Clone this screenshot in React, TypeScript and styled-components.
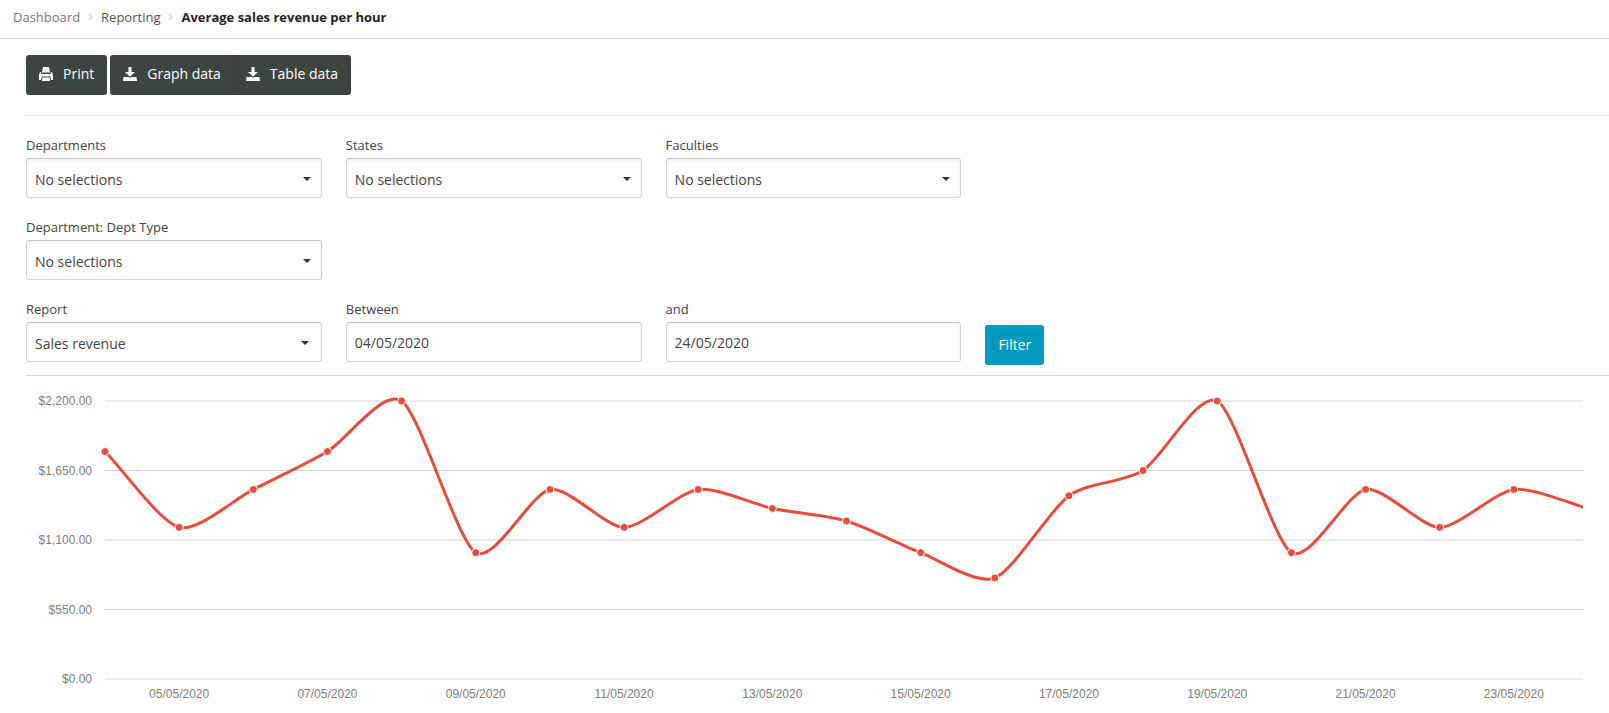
import React, { useId, useLayoutEffect, useRef, useState } from "react";
import styled, { createGlobalStyle } from "styled-components";

const GlobalStyle = createGlobalStyle`
  *, *::before, *::after { box-sizing: border-box; }
  body {
    margin: 0;
    background: #fff;
    color: #444;
    font-family: "Open Sans", "Liberation Sans", sans-serif;
    font-size: 14px;
    overflow-x: hidden;
  }
`;

const Breadcrumb = styled.nav`
  border-bottom: 1px solid #d9d9d9;
  padding: 7px 13px 11px;

  ol {
    display: flex;
    align-items: center;
    gap: 8px;
    margin: 0;
    padding: 0;
    list-style: none;
    font-size: 13px;
  }
  li { display: flex; align-items: center; gap: 8px; }
`;

const CrumbLink = styled.a<{ $dark?: boolean }>`
  color: ${(p) => (p.$dark ? "#555" : "#777")};
  text-decoration: none;
  line-height: 20px;
`;

const CurrentCrumb = styled.span`
  color: #222;
  font-weight: 700;
  line-height: 20px;
`;

const Content = styled.main`
  padding: 16px 0 0 26px;
`;

const Button = styled.button<{ $primary?: boolean }>`
  display: inline-flex;
  align-items: center;
  gap: 10px;
  height: 40px;
  padding: 0 13px;
  border: 0;
  border-radius: 3px;
  background: ${(p) => (p.$primary ? "#0099c0" : "#3d4542")};
  color: #fff;
  font: inherit;
  line-height: 20px;
  cursor: pointer;
`;

const Toolbar = styled.div`
  display: flex;
  gap: 3px;
  padding-bottom: 20px;
  border-bottom: 1px solid #ebebeb;

  ${Button} { padding-bottom: 2px; }
`;

const ButtonGroup = styled.div`
  display: flex;

  ${Button}:first-child { border-radius: 3px 0 0 3px; }
  ${Button}:last-child {
    padding-left: 11px;
    border-left: 1px solid #373e3b;
    border-radius: 0 3px 3px 0;
  }
`;

const FilterForm = styled.form`
  display: flex;
  flex-direction: column;
  gap: 20px;
  padding: 20px 8px 13px 0;
  border-bottom: 1px solid #d9d9d9;
`;

const FieldRow = styled.div`
  display: grid;
  grid-template-columns: repeat(5, 1fr);
  column-gap: 24px;
`;

const FieldCell = styled.div`
  display: flex;
  flex-direction: column;
  gap: 4px;
`;

const Label = styled.label`
  font-size: 13px;
  line-height: 18px;
`;

const SelectWrap = styled.div<{ $inset: number }>`
  position: relative;

  svg {
    position: absolute;
    top: 19px;
    right: ${(p) => p.$inset}px;
    pointer-events: none;
  }
`;

const controlStyle = `
  display: block;
  width: 100%;
  height: 40px;
  margin: 0;
  border: 1px solid #d4d4d4;
  border-top-color: #c8c8c8;
  border-radius: 3px;
  background: #fff;
  box-shadow: inset 0 1px 3px rgba(0, 0, 0, 0.08);
  color: #444;
  font: inherit;
  outline: none;
`;

const Select = styled.select`
  ${controlStyle}
  appearance: none;
  padding: 2px 28px 0 8px;
`;

const TextInput = styled.input`
  ${controlStyle}
  padding: 0 8px;
`;

const SubmitCell = styled.div`
  padding-top: 25px;
  margin-bottom: -3px;
`;

const ChartBox = styled.figure`
  margin: 0 26px 0 0;
  overflow: hidden;

  svg { display: block; }
  text {
    font-family: "Liberation Sans", Arial, sans-serif;
    font-size: 12px;
    fill: #808080;
  }
`;

const Chevron = () => (
  <svg width="5" height="8" viewBox="0 0 5 8" aria-hidden="true">
    <path d="M1 1 4 4 1 7" fill="none" stroke="#d8d8d8" strokeWidth="1.5" />
  </svg>
);

const Caret = () => (
  <svg width="8" height="4" viewBox="0 0 8 4" aria-hidden="true">
    <path d="M0 0h8L4 4z" fill="#333" />
  </svg>
);

const PrintIcon = () => (
  <svg width="14" height="14" viewBox="0 0 14 14" fill="#fff" aria-hidden="true">
    <path d="M4 0h6l1 5.500H3z" />
    <path d="M1.200 5h1v2h9.600V5h1L14 7.500V13h-2l-.6-3.500H2.600L2 13H0V7.500z" />
    <path d="M3.300 10.500h7.400l.4 3.500H2.900z" />
  </svg>
);

const DownloadIcon = () => (
  <svg width="14" height="14" viewBox="0 0 14 14" fill="#fff" aria-hidden="true">
    <path d="M5.500 0h3v5H12L7 9.800 2 5h3.500z" />
    <path d="M0.500 10h5.300L7 11l1.200-1h5.300l.5 4H0z" />
  </svg>
);

function SelectField({ label, options, inset = 11 }: { label: string; options: string[]; inset?: number }) {
  const id = useId();
  return (
    <FieldCell>
      <Label htmlFor={id}>{label}</Label>
      <SelectWrap $inset={inset}>
        <Select id={id}>
          {options.map((o) => (
            <option key={o}>{o}</option>
          ))}
        </Select>
        <Caret />
      </SelectWrap>
    </FieldCell>
  );
}

function DateField({ label, value }: { label: string; value: string }) {
  const id = useId();
  return (
    <FieldCell>
      <Label htmlFor={id}>{label}</Label>
      <TextInput id={id} type="text" defaultValue={value} />
    </FieldCell>
  );
}

// Daily revenue, from 04/05/2020 to 24/05/2020
const revenue = [
  1800, 1200, 1500, 1800, 2200, 1000, 1500, 1200, 1500, 1350, 1250, 1000, 800, 1450, 1650, 2200, 1000, 1500, 1200,
  1500, 1350,
];
const ticks = [2200, 1650, 1100, 550, 0];
const money = (n: number) => "$" + n.toLocaleString("en-US", { minimumFractionDigits: 2 });

type Point = { x: number; y: number };

function smoothPath(pts: Point[]) {
  const slope = (a: Point, b: Point) => (a.y - b.y) / (a.x - b.x);
  const grads = pts.map((p, i) => slope(pts[i + 1] ?? p, pts[i - 1] ?? p));
  return pts
    .map((p, i) => {
      if (i === 0) return `M${p.x},${p.y}`;
      const prev = pts[i - 1];
      const ix = (p.x - prev.x) / 4;
      return `C${prev.x + ix},${prev.y + ix * grads[i - 1]},${p.x - ix},${p.y - ix * grads[i]},${p.x},${p.y}`;
    })
    .join("");
}

function RevenueChart() {
  const box = useRef<HTMLElement>(null);
  const [width, setWidth] = useState(0);

  useLayoutEffect(() => {
    const el = box.current!;
    const measure = () => setWidth(el.clientWidth);
    measure();
    const observer = new ResizeObserver(measure);
    observer.observe(el);
    return () => observer.disconnect();
  }, []);

  const left = 79;
  const top = 25;
  const plotHeight = 278;
  const bottom = top + plotHeight;
  const step = (width + 5 - left) / (revenue.length - 1);
  const yOf = (v: number) => bottom - (v / 2200) * plotHeight;
  const points = revenue.map((v, i) => ({ x: left + i * step, y: yOf(v) }));

  return (
    <ChartBox ref={box}>
      {width > 0 && (
        <svg width={width} height={336} role="img" aria-label="Sales revenue per day">
          {ticks.map((t) => (
            <g key={t}>
              <text x={left - 13} y={yOf(t) + 4} textAnchor="end">
                {money(t)}
              </text>
              <line x1={left} x2={width} y1={yOf(t)} y2={yOf(t)} stroke="#aaa" strokeWidth="0.5" />
            </g>
          ))}
          {points.map((p, i) =>
            i % 2 === 1 ? (
              <text key={i} x={p.x} y={bottom + 19} textAnchor="middle">
                {String(i + 4).padStart(2, "0")}/05/2020
              </text>
            ) : null
          )}
          <path d={smoothPath(points)} fill="none" stroke="#e74c3c" strokeWidth="3" />
          {points.map((p, i) => (
            <circle key={i} cx={p.x} cy={p.y} r="4" fill="#e74c3c" stroke="#fff" strokeWidth="1" />
          ))}
        </svg>
      )}
    </ChartBox>
  );
}

export default function App() {
  return (
    <>
      <GlobalStyle />
      <Breadcrumb aria-label="Breadcrumb">
        <ol>
          <li>
            <CrumbLink href="#dashboard">Dashboard</CrumbLink>
            <Chevron />
          </li>
          <li>
            <CrumbLink href="#reporting" $dark>
              Reporting
            </CrumbLink>
            <Chevron />
          </li>
          <li>
            <CurrentCrumb aria-current="page">Average sales revenue per hour</CurrentCrumb>
          </li>
        </ol>
      </Breadcrumb>
      <Content>
        <Toolbar>
          <Button type="button">
            <PrintIcon />
            Print
          </Button>
          <ButtonGroup>
            <Button type="button">
              <DownloadIcon />
              Graph data
            </Button>
            <Button type="button">
              <DownloadIcon />
              Table data
            </Button>
          </ButtonGroup>
        </Toolbar>
        <FilterForm onSubmit={(e) => e.preventDefault()}>
          <FieldRow>
            <SelectField label="Departments" options={["No selections"]} />
            <SelectField label="States" options={["No selections"]} />
            <SelectField label="Faculties" options={["No selections"]} />
          </FieldRow>
          <FieldRow>
            <SelectField label="Department: Dept Type" options={["No selections"]} />
          </FieldRow>
          <FieldRow>
            <SelectField label="Report" options={["Sales revenue"]} inset={13} />
            <DateField label="Between" value="04/05/2020" />
            <DateField label="and" value="24/05/2020" />
            <SubmitCell>
              <Button type="submit" $primary>
                Filter
              </Button>
            </SubmitCell>
          </FieldRow>
        </FilterForm>
        <RevenueChart />
      </Content>
    </>
  );
}
